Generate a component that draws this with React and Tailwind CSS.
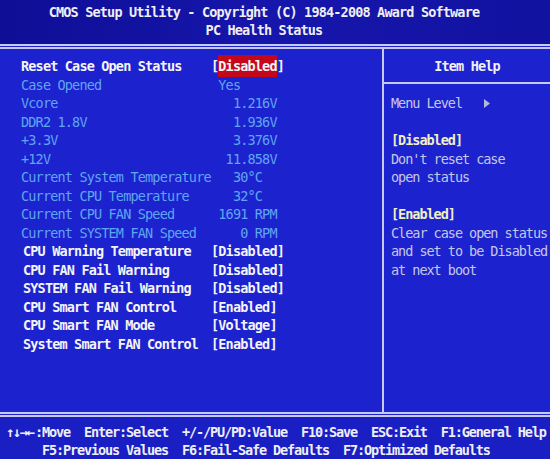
import React from "react"

const rows = [
  { label: "Reset Case Open Status", value: "Disabled", kind: "selected" },
  { label: "Case Opened", value: " Yes", kind: "info" },
  { label: "Vcore", value: "   1.216V", kind: "info" },
  { label: "DDR2 1.8V", value: "   1.936V", kind: "info" },
  { label: "+3.3V", value: "   3.376V", kind: "info" },
  { label: "+12V", value: "  11.858V", kind: "info" },
  { label: "Current System Temperature", value: "   30°C", kind: "info" },
  { label: "Current CPU Temperature", value: "   32°C", kind: "info" },
  { label: "Current CPU FAN Speed", value: " 1691 RPM", kind: "info" },
  { label: "Current SYSTEM FAN Speed", value: "    0 RPM", kind: "info" },
  { label: "CPU Warning Temperature", value: "[Disabled]", kind: "option" },
  { label: "CPU FAN Fail Warning", value: "[Disabled]", kind: "option" },
  { label: "SYSTEM FAN Fail Warning", value: "[Disabled]", kind: "option" },
  { label: "CPU Smart FAN Control", value: "[Enabled]", kind: "option" },
  { label: "CPU Smart FAN Mode", value: "[Voltage]", kind: "option" },
  { label: "System Smart FAN Control", value: "[Enabled]", kind: "option" },
]

const help = [
  { text: "", kind: "blank" },
  { text: "[Disabled]", kind: "key" },
  { text: "Don't reset case", kind: "text" },
  { text: "open status", kind: "text" },
  { text: "", kind: "blank" },
  { text: "[Enabled]", kind: "key" },
  { text: "Clear case open status", kind: "text" },
  { text: "and set to be Disabled", kind: "text" },
  { text: "at next boot", kind: "text" },
]

const Row = ({ label, value, kind }) => {
  const info = kind === "info"
  return (
    <div className="flex h-[18.5px] items-center whitespace-pre">
      <span
        className={
          info
            ? "w-[190px] font-normal text-[#5fa6f0]"
            : kind === "option"
              ? "w-[190px] pl-[2px] font-bold text-[#f4f4f6]"
              : "w-[190px] font-bold text-[#f4f4f6]"
        }
      >
        {label}
      </span>
      {kind === "selected" ? (
        <span className="font-bold text-[#f4f4f6]">
          [<span className="bg-[#c4081a] py-[3px]">{value}</span>]
        </span>
      ) : (
        <span className={info ? "font-normal text-[#5fa6f0]" : "font-bold text-[#f4f4f6]"}>
          {value}
        </span>
      )}
    </div>
  )
}

export default function App() {
  return (
    <div
      className="flex h-[459px] w-[550px] flex-col overflow-hidden bg-[#1d22cf] text-[13.5px] tracking-[-0.83px]"
      style={{ fontFamily: '"DejaVu Sans Mono", "Liberation Mono", monospace' }}
    >
      {/* Title band */}
      <div className="h-[44px] bg-gradient-to-r from-[#0e0e96] via-[#1616ac] to-[#1212a0] pt-[3px] pr-[22px] text-center font-bold leading-[18px] text-[#eeeef4]">
        <div className="whitespace-pre">CMOS Setup Utility - Copyright (C) 1984-2008 Award Software</div>
        <div>PC Health Status</div>
      </div>

      <div className="h-[5px] border-y-2 border-[#c6cbee]" />

      {/* Main panel */}
      <div className="flex h-[363px]">
        <div className="w-[382px] pt-[8px] pl-[21px]">
          {rows.map((r) => (
            <Row key={r.label} {...r} />
          ))}
        </div>

        <div className="flex-1 border-l-2 border-[#c6cbee]">
          <div className="flex h-[35px] items-center justify-center border-b-2 border-[#c6cbee] pt-[2px] font-bold text-[#f0f0f6]">
            Item Help
          </div>
          <div className="pt-[10px] pl-[7px] tracking-[-1.03px] text-[#c3c8e6]">
            <div className="flex h-[18.5px] items-center whitespace-pre">
              Menu Level
              <svg width="6" height="9" viewBox="0 0 6 9" className="ml-[22px]">
                <path d="M0 0 L6 4.5 L0 9 Z" fill="#b4b8d8" />
              </svg>
            </div>
            {help.map((h, i) => (
              <div
                key={i}
                className={
                  h.kind === "key"
                    ? "h-[18.5px] whitespace-pre font-bold leading-[18.5px] text-[#f0f0c4]"
                    : "h-[18.5px] whitespace-pre leading-[18.5px]"
                }
              >
                {h.text}
              </div>
            ))}
          </div>
        </div>
      </div>

      <div className="h-[5px] border-y-2 border-[#c6cbee]" />

      {/* Key legend */}
      <div className="flex-1 bg-[#1a1fc4] pt-[6px] pl-[6px] font-bold leading-[18px] tracking-[-1.13px] text-[#eeeef6]">
        <div className="flex whitespace-pre">
          <span className="inline-block w-[29px] text-[14px] tracking-[-1.6px]">↑↓→←</span>
          <span>:Move  Enter:Select  +/-/PU/PD:Value  F10:Save  ESC:Exit  F1:General Help</span>
        </div>
        <div className="whitespace-pre pl-[36px]">F5:Previous Values  F6:Fail-Safe Defaults  F7:Optimized Defaults</div>
      </div>
    </div>
  )
}
